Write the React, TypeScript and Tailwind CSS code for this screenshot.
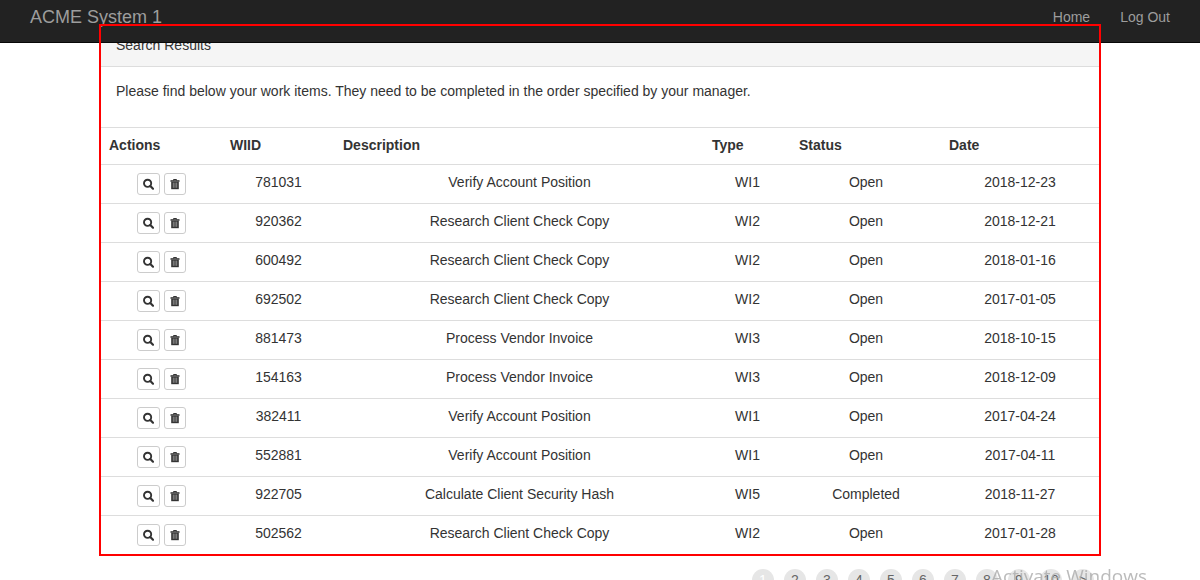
const items = [
  ["781031", "Verify Account Position", "WI1", "Open", "2018-12-23"],
  ["920362", "Research Client Check Copy", "WI2", "Open", "2018-12-21"],
  ["600492", "Research Client Check Copy", "WI2", "Open", "2018-01-16"],
  ["692502", "Research Client Check Copy", "WI2", "Open", "2017-01-05"],
  ["881473", "Process Vendor Invoice", "WI3", "Open", "2018-10-15"],
  ["154163", "Process Vendor Invoice", "WI3", "Open", "2018-12-09"],
  ["382411", "Verify Account Position", "WI1", "Open", "2017-04-24"],
  ["552881", "Verify Account Position", "WI1", "Open", "2017-04-11"],
  ["922705", "Calculate Client Security Hash", "WI5", "Completed", "2018-11-27"],
  ["502562", "Research Client Check Copy", "WI2", "Open", "2017-01-28"],
];

const columns = [
  { name: "Actions", width: "w-[121px]" },
  { name: "WIID", width: "w-[113px]" },
  { name: "Description", width: "w-auto" },
  { name: "Type", width: "w-[87px]" },
  { name: "Status", width: "w-[150px]" },
  { name: "Date", width: "w-[158px]" },
];

const pages = ["1", "2", "3", "4", "5", "6", "7", "8", "9", "10", ">"];

function SearchIcon() {
  return (
    <svg className="h-3 w-[11px]" viewBox="0 0 11 12" fill="none" stroke="currentColor" aria-hidden="true">
      <circle cx="4.600" cy="5.300" r="3.600" strokeWidth="1.900" />
      <path d="M7.300 8l2.700 2.700" strokeWidth="2.200" strokeLinecap="round" />
    </svg>
  );
}

function TrashIcon() {
  return (
    <svg className="h-3 w-[10px]" viewBox="0 0 10 12" aria-hidden="true">
      <path d="M3.500 2.500v-1h3v1" fill="none" stroke="currentColor" />
      <path d="M0.500 2.200h9v1.600h-9z" fill="currentColor" />
      <path d="M1.200 4h7.600v7.200H1.200z" fill="currentColor" />
      <path d="M3.300 4.600v5.200M5 4.600v5.200M6.700 4.600v5.200" fill="none" stroke="#b5b5b5" strokeWidth="0.700" />
    </svg>
  );
}

const buttonStyle =
  "flex h-[22px] items-center justify-center rounded-[3px] border border-[#ccc] bg-white px-[5px] text-[#333]";

export default function App() {
  return (
    <div className="relative h-screen overflow-hidden bg-white font-['Liberation_Sans',Arial,sans-serif] text-sm text-[#333]">
      <header className="sticky top-0 z-10 flex h-[43px] items-start justify-between border-b border-[#080808] bg-[#222] px-[30px] pt-[7px] leading-5 text-[#9d9d9d]">
        <a href="#" className="text-lg leading-5">ACME System 1</a>
        <nav className="flex gap-[30px]">
          <a href="#">Home</a>
          <a href="#">Log Out</a>
        </nav>
      </header>

      <main className="mx-[99px] -mt-[19px]">
        <section className="relative p-[2px]">
          <div className="pointer-events-none absolute inset-0 z-20 border-2 border-[#ff0000]" />
          <h1 className="border-b border-[#ddd] bg-[#f5f5f5] px-[15px] pt-[9px] pb-[11px] leading-5">Search Results</h1>
          <p className="px-[15px] pt-[14px] pb-[26px] leading-5">
            Please find below your work items. They need to be completed in the order specified by your manager.
          </p>
          <table className="w-full table-fixed border-collapse leading-5">
            <thead>
              <tr className="border-t border-[#ddd]">
                {columns.map((c) => (
                  <th key={c.name} className={`${c.width} px-2 pt-[7px] pb-[9px] text-left font-bold`}>{c.name}</th>
                ))}
              </tr>
            </thead>
            <tbody>
              {items.map((row) => (
                <tr key={row[0]} className="border-t border-[#ddd] text-center align-top">
                  <td className="py-2">
                    <div className="flex justify-center gap-1">
                      <button type="button" aria-label={`View ${row[0]}`} className={buttonStyle}><SearchIcon /></button>
                      <button type="button" aria-label={`Delete ${row[0]}`} className={buttonStyle}><TrashIcon /></button>
                    </div>
                  </td>
                  {row.map((cell, i) => (
                    <td key={i} className="px-2 pt-[7px]">{cell}</td>
                  ))}
                </tr>
              ))}
            </tbody>
          </table>
        </section>

        <nav aria-label="Pages" className="flex justify-end gap-[10px] pt-[13px] pr-[7px]">
          {pages.map((p) => (
            <a
              key={p}
              href="#"
              className={`flex size-[22px] items-center justify-center rounded-full bg-[#e6e6e6] ${p === "1" ? "text-white" : "text-[#666]"}`}
            >
              {p}
            </a>
          ))}
        </nav>
      </main>

      <div className="pointer-events-none absolute right-[53px] -bottom-2 z-30 font-['Open_Sans',sans-serif] text-[19px] leading-6 text-[#aaa]/80">
        Activate Windows
      </div>
    </div>
  );
}
